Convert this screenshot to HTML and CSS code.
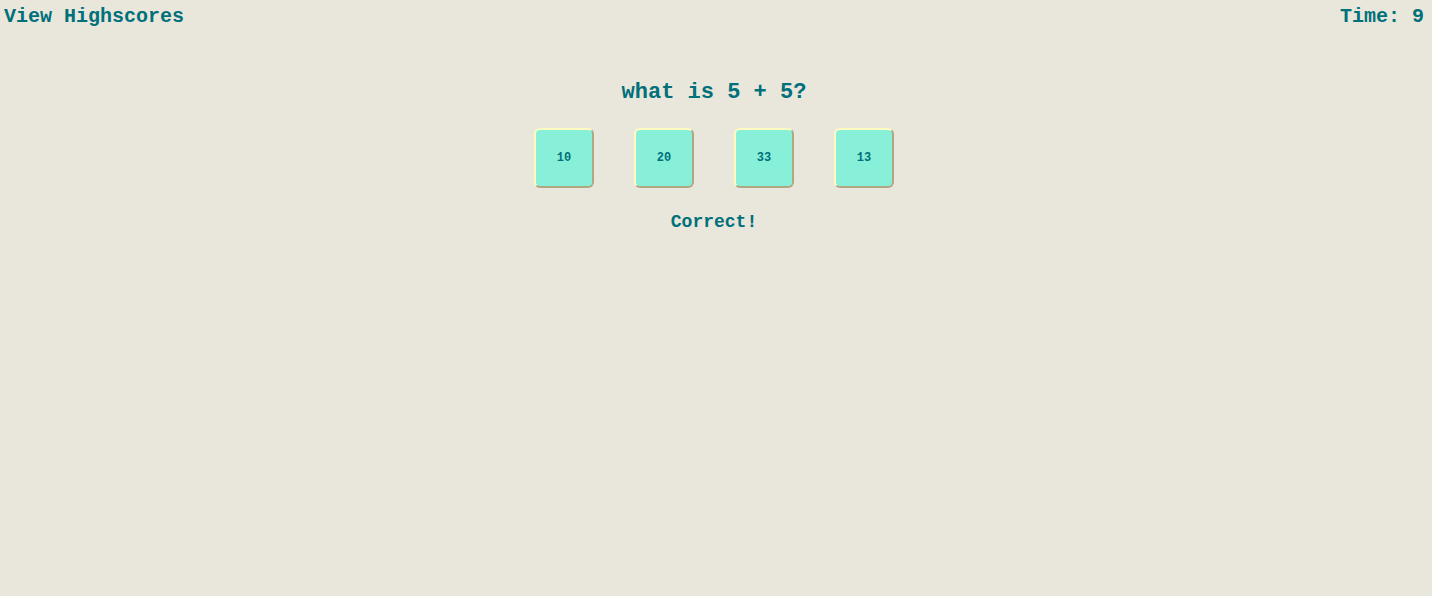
FILE: index.html
```html
<!DOCTYPE html>
<html>
<head>
<meta charset="utf-8">
<link rel="stylesheet" href="styles.css">
</head>
<body>
<header class="top">
  <a class="highscores">View Highscores</a>
  <div class="timer">Time: 9</div>
</header>
<main class="quiz">
  <h1 class="question">what is 5 + 5?</h1>
  <div class="choices">
    <button class="choice">10</button>
    <button class="choice">20</button>
    <button class="choice">33</button>
    <button class="choice">13</button>
  </div>
  <p class="result">Correct!</p>
</main>
</body>
</html>
```
FILE: styles.css
```css
html, body {
  background: #e9e6db;
}
body {
  margin: 0 8px 0 4px;
  font-family: "Liberation Mono", "Courier New", monospace;
  font-weight: bold;
  color: #00707a;
}
.top {
  display: flex;
  justify-content: space-between;
  padding-top: 5px;
  font-size: 20px;
}
.highscores {
  color: #00707a;
}
.quiz {
  display: flex;
  flex-direction: column;
  align-items: center;
}
.question {
  margin: 52px 0 0;
  font-size: 22px;
}
.choices {
  display: flex;
  gap: 40px;
  margin-top: 23px;
}
.choice {
  width: 60px;
  height: 60px;
  box-sizing: border-box;
  background: #88f0d8;
  border: 2px solid #fffbc0;
  border-color: #fffbc0 #b0a883 #b0a883 #fffbc0;
  border-radius: 6px;
  font-family: "Liberation Mono", "Courier New", monospace;
  font-weight: bold;
  font-size: 12px;
  color: #00707a;
  padding: 0;
}
.result {
  margin: 24px 0 0;
  font-size: 18px;
}
```
